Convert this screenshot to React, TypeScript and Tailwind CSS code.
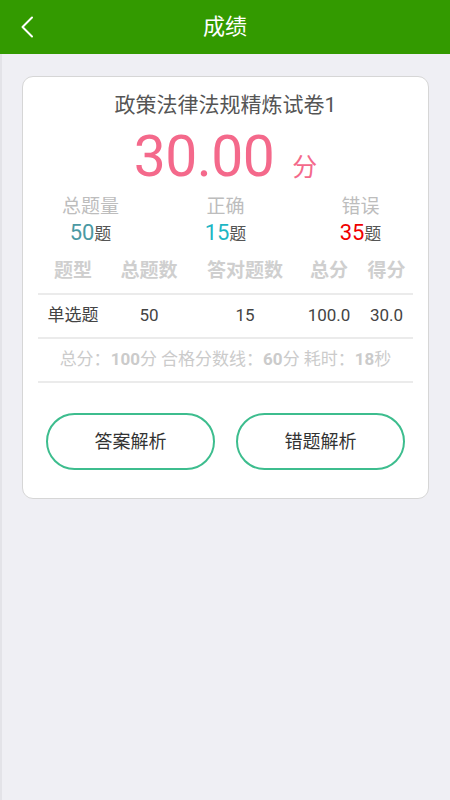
import React from "react";

const font = { fontFamily: "Roboto, 'Noto Sans CJK SC', sans-serif" };

export default function App() {
  const cols = "grid grid-cols-[70px_82px_110px_58px_57px] items-center text-center";
  return (
    <div className="w-[450px] h-[800px] bg-[#efeff4] flex flex-col" style={font}>
      <div className="h-[54px] bg-[#339a00] flex items-center relative shrink-0">
        <svg className="absolute left-[20px] top-[16px]" width="14" height="22" viewBox="0 0 14 22">
          <path d="M12 1.5 L2.5 11 L12 20.5" fill="none" stroke="#fff" strokeWidth="2" strokeLinecap="round" strokeLinejoin="round" />
        </svg>
        <div className="w-full text-center text-white text-[22px] leading-none">成绩</div>
      </div>
      <div className="flex-1 border-l-2 border-[#e3e3e8] pl-[20px] pr-[21px] pt-[22px]">
        <div className="bg-white border-[1.5px] border-[#d6d6d6] rounded-[11px] pt-[14px] pb-[28px]">
          <div className="text-center text-[21px] leading-[29px] text-[#555]">政策法律法规精炼试卷1</div>
          <div className="flex justify-center items-baseline mt-[8px] text-[#f4698b]">
            <span className="text-[57px] leading-[58px] tracking-[-0.5px]">30.00</span>
            <span className="text-[25px] ml-[18px]">分</span>
          </div>
          <div className="grid grid-cols-3 mt-[8px] text-center">
            {[
              ["总题量", "50", "text-[#4b99a3]"],
              ["正确", "15", "text-[#1db6c4]"],
              ["错误", "35", "text-[#f00000]"],
            ].map(([l, n, c]) => (
              <div key={l} className="flex flex-col items-center">
                <div className="text-[19px] leading-[24px] text-[#bdbdbd]">{l}</div>
                <div className="leading-[26px] mt-[1px]">
                  <span className={`text-[22px] ${c}`}>{n}</span>
                  <span className="text-[17px] text-[#555]">题</span>
                </div>
              </div>
            ))}
          </div>
          <div className="px-[15px] mt-[1px]">
            <div className={`${cols} h-[46px] pt-[2px] text-[19px] font-bold text-[#cfcfcf] border-b-2 border-[#ebebeb]`}>
              <div>题型</div>
              <div>总题数</div>
              <div>答对题数</div>
              <div>总分</div>
              <div>得分</div>
            </div>
            <div className={`${cols} h-[44px] text-[17px] text-[#444] border-b-2 border-[#ebebeb]`}>
              <div>单选题</div>
              <div>50</div>
              <div>15</div>
              <div>100.0</div>
              <div>30.0</div>
            </div>
            <div className="h-[44px] flex items-center justify-center text-[17px] text-[#cbcbcb] border-b-2 border-[#ebebeb]">
              <span>总分：</span>
              <span className="font-bold">100</span>
              <span>分 合格分数线：</span>
              <span className="font-bold">60</span>
              <span>分 耗时：</span>
              <span className="font-bold">18</span>
              <span>秒</span>
            </div>
          </div>
          <div className="flex justify-between px-[23px] mt-[30px]">
            <button className="w-[169px] h-[57px] rounded-full border-2 border-[#3dbd8e] text-[18px] text-[#333] bg-white">答案解析</button>
            <button className="w-[169px] h-[57px] rounded-full border-2 border-[#3dbd8e] text-[18px] text-[#333] bg-white">错题解析</button>
          </div>
        </div>
      </div>
    </div>
  );
}
